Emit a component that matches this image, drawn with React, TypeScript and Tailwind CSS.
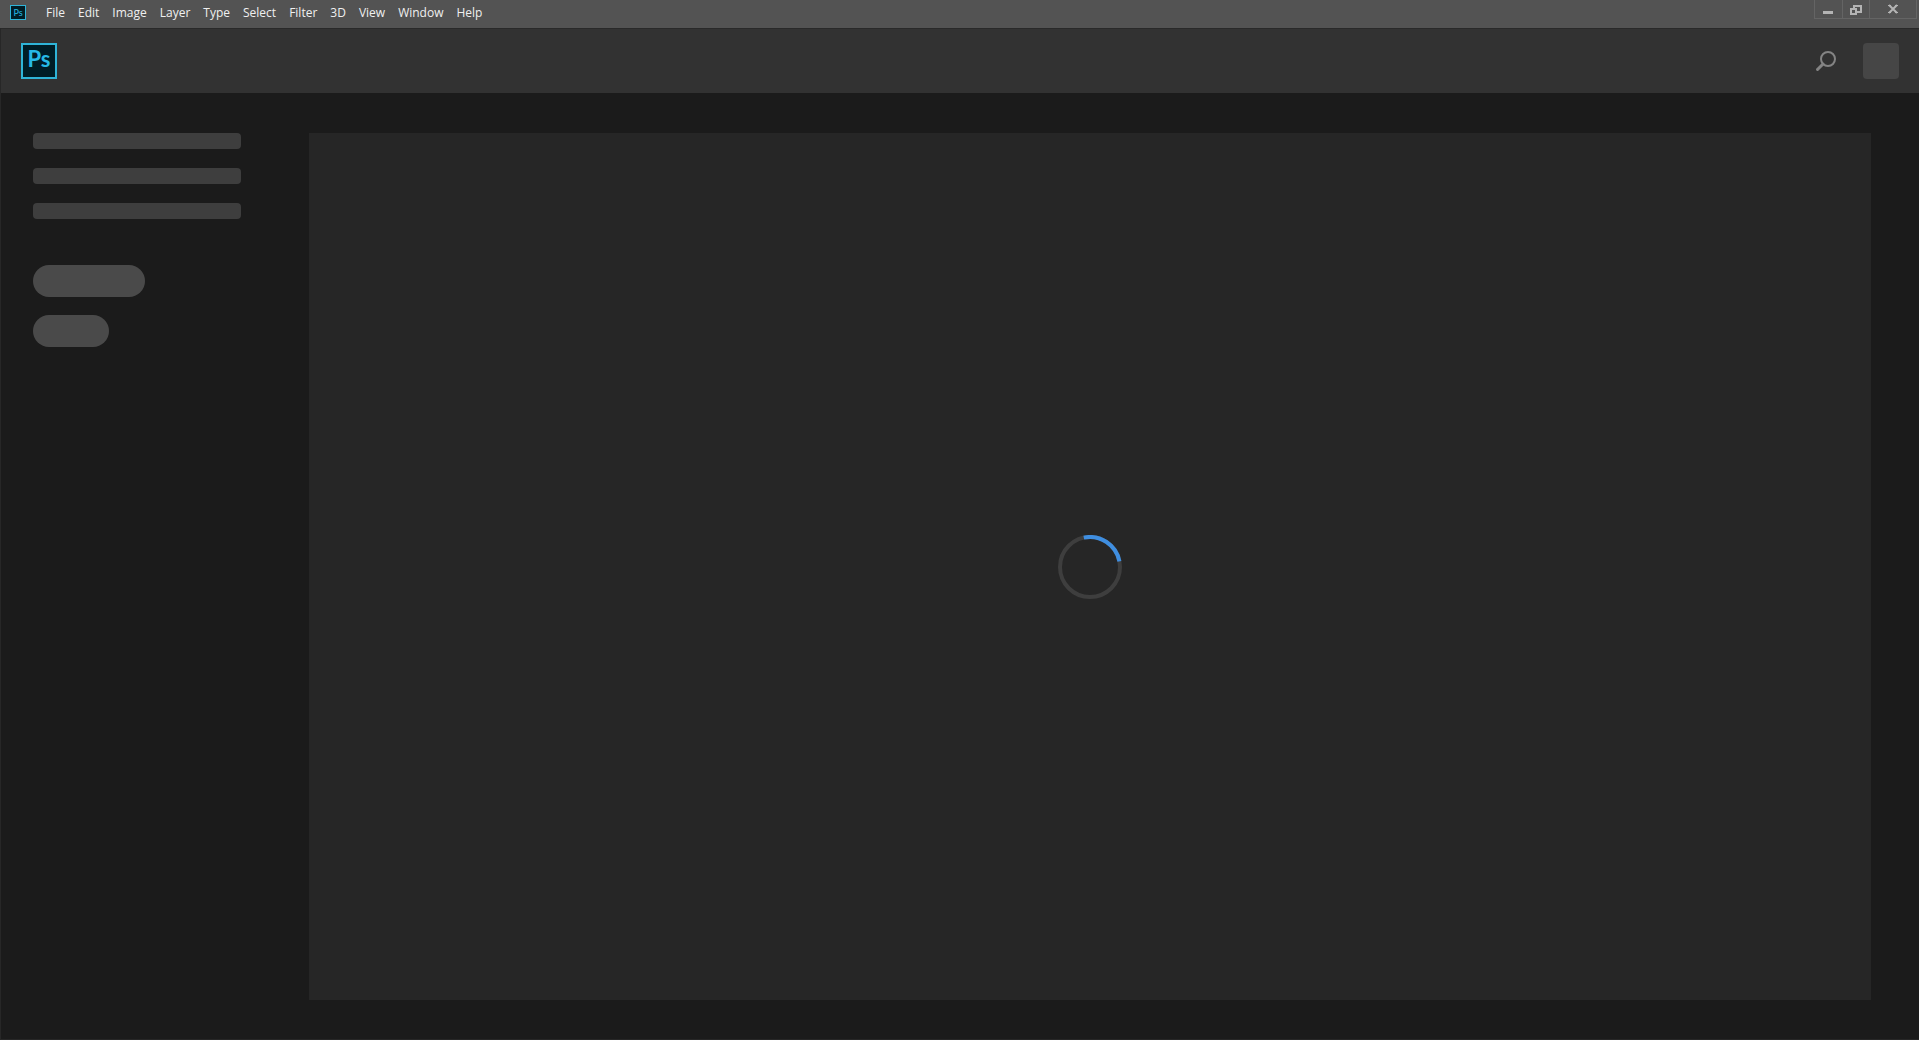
import { clsx } from 'clsx';

const MENUS = [
  'File',
  'Edit',
  'Image',
  'Layer',
  'Type',
  'Select',
  'Filter',
  '3D',
  'View',
  'Window',
  'Help',
];

const RECENT_LINKS = ['recent-1', 'recent-2', 'recent-3'];

function PsLogo({ small = false }: { small?: boolean }) {
  return (
    <span
      className={clsx(
        'flex shrink-0 items-center justify-center bg-[#001d26] font-["Lato",sans-serif] text-[#26b9e6]',
        small
          ? 'h-[15px] w-4 border border-[#2fb4d8] text-[9px] leading-none'
          : 'size-9 border-2 border-[#2fb4d8] pb-1 text-[22px] leading-none font-bold',
      )}
    >
      Ps
    </span>
  );
}

function WindowControls() {
  return (
    <div className="mr-[2px] flex h-[19px] border-x border-b border-[#646464] text-[#b4b4b4]">
      <button type="button" aria-label="Minimize" className="w-[27px]">
        <svg viewBox="0 0 27 18" className="h-[18px] w-[27px]">
          <rect x="8" y="11" width="10" height="3" fill="currentColor" />
        </svg>
      </button>
      <button
        type="button"
        aria-label="Restore"
        className="w-[27px] border-l border-[#646464]"
      >
        <svg viewBox="0 0 26 18" className="h-[18px] w-[26px]" fill="none" stroke="currentColor" strokeWidth="2">
          <path d="M11 8V6h7v6h-4" />
          <path d="M8 9h5v5H8z" />
        </svg>
      </button>
      <button
        type="button"
        aria-label="Close"
        className="w-[47px] border-l border-[#646464]"
      >
        <svg viewBox="0 0 46 18" className="h-[18px] w-[46px]" fill="none" stroke="currentColor" strokeWidth="2">
          <path d="M19 5l8 8M27 5l-8 8" />
          <path d="M18 5.5h3M25 5.5h3M18 12.5h3M25 12.5h3" strokeWidth="1" />
        </svg>
      </button>
    </div>
  );
}

function MenuBar() {
  return (
    <div className="flex h-7 items-start justify-between bg-[#535353] pl-[10px]">
      <div className="flex h-[25px] items-center">
        <PsLogo small />
        <nav className="ml-5 flex gap-[13px] font-['Open_Sans',sans-serif] text-[12px] leading-4 text-[#f0f0f0]">
          {MENUS.map((menu) => (
            <button key={menu} type="button">
              {menu}
            </button>
          ))}
        </nav>
      </div>
      <WindowControls />
    </div>
  );
}

function Header() {
  return (
    <header className="flex h-[65px] items-center justify-between border-t border-[#292929] bg-[#323232] px-5">
      <PsLogo />
      <div className="flex items-center gap-6">
        <button type="button" aria-label="Search" className="text-[#848484]">
          <svg viewBox="0 0 24 24" className="size-6" fill="none" stroke="currentColor" strokeWidth="2">
            <circle cx="13" cy="10" r="7" />
            <path d="M8 15l-5.5 5.5" strokeWidth="3" strokeLinecap="round" />
          </svg>
        </button>
        <div className="size-9 rounded bg-[#464646]" />
      </div>
    </header>
  );
}

function Sidebar() {
  return (
    <aside className="w-[276px] shrink-0">
      <div className="flex flex-col gap-[19px]">
        {RECENT_LINKS.map((link) => (
          <div key={link} className="h-4 w-52 rounded bg-[#3e3e3e]" />
        ))}
      </div>
      <div className="mt-[46px] flex flex-col gap-[18px]">
        <div className="h-8 w-28 rounded-full bg-[#4a4a4a]" />
        <div className="h-8 w-[76px] rounded-full bg-[#4a4a4a]" />
      </div>
    </aside>
  );
}

function Spinner() {
  return (
    <svg viewBox="0 0 64 64" className="size-16" fill="none" strokeWidth="4" role="status" aria-label="Loading">
      <circle cx="32" cy="32" r="30" stroke="#3e3e3e" />
      <path d="M25.8 2.65A30 30 0 0 1 61.4 26.3" stroke="#3f8ee0" />
    </svg>
  );
}

export default function App() {
  return (
    <div className="flex min-h-screen flex-col bg-[#1b1b1b]">
      <MenuBar />
      <div className="flex flex-1 flex-col border-b border-l border-[#272727]">
        <Header />
        <div className="flex flex-1 pt-10 pr-12 pb-[39px] pl-8">
          <Sidebar />
          <main className="flex flex-1 items-center justify-center bg-[#262626]">
            <Spinner />
          </main>
        </div>
      </div>
    </div>
  );
}
